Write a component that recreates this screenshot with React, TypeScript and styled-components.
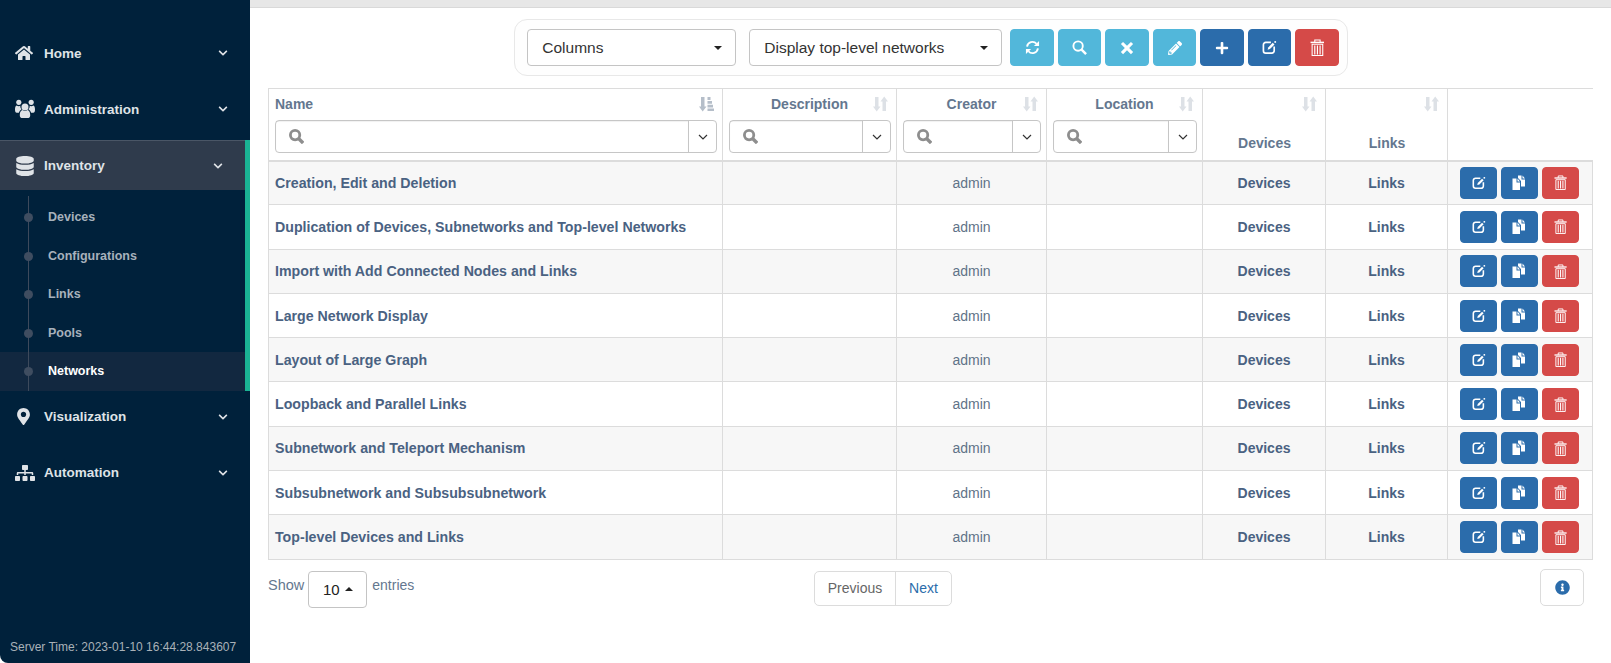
import { ReactNode } from "react";
import styled, { createGlobalStyle } from "styled-components";
import {
  FaChevronDown,
  FaDatabase,
  FaHome,
  FaInfoCircle,
  FaMapMarkerAlt,
  FaPencilAlt,
  FaPlus,
  FaSitemap,
} from "react-icons/fa";

const GlobalStyle = createGlobalStyle`
  html, body {
    margin: 0;
    padding: 0;
    height: 663px;
    overflow: hidden;
    background: #fff;
    font-family: "Liberation Sans", Arial, sans-serif;
  }
  * { box-sizing: border-box; }
`;

const rows = [
  "Creation, Edit and Deletion",
  "Duplication of Devices, Subnetworks and Top-level Networks",
  "Import with Add Connected Nodes and Links",
  "Large Network Display",
  "Layout of Large Graph",
  "Loopback and Parallel Links",
  "Subnetwork and Teleport Mechanism",
  "Subsubnetwork and Subsubsubnetwork",
  "Top-level Devices and Links",
];

const subItems = ["Devices", "Configurations", "Links", "Pools", "Networks"];

const SortIcon = () => (
  <svg width="15" height="16" viewBox="0 0 15 16" fill="currentColor">
    <path d="M2 1h3.500v9.500H7.500L3.700 15.500 0 10.500h2z" />
    <path d="M9.500 5.500H7.500L11.200.5 15 5.500h-2V15H9.500z" />
  </svg>
);

const SortActiveIcon = () => (
  <svg width="15" height="16" viewBox="0 0 15 16" fill="currentColor">
    <path d="M2 1h3.500v9.500H7.500L3.700 15.500 0 10.500h2z" />
    <path d="M8.500 1h3v3h-3zM8.500 5h4.500v2.700H8.500zM8.500 8.700H14v2.700H8.500zM8.500 12.400H15V15H8.500z" />
  </svg>
);

const DuplicateIcon = () => (
  <svg width="15" height="16" viewBox="0 0 15 16" fill="currentColor">
    <path d="M.5 3.500h4V7.500H8V15H.5z" />
    <path d="M5.500 3.500 8 6.500H5.500z" />
    <path d="M6 .5h3.500V4.500H13V11.500H9V6L6 3z" />
    <path d="M10.500.5 13 3.500h-2.500z" />
  </svg>
);

const RefreshIcon = () => (
  <svg width="15" height="15" viewBox="0 0 16 16" fill="none" stroke="currentColor" strokeWidth="2">
    <path d="M2.200 7A5.800 5.800 0 0 1 12.300 4" />
    <path d="M13.800 9A5.800 5.800 0 0 1 3.700 12" />
    <path d="M15 1v5.500H9.500zM1 15V9.500h5.500z" fill="currentColor" stroke="none" />
  </svg>
);

const SearchIcon = ({ size = 15, stroke = 2 }: { size?: number; stroke?: number }) => (
  <svg width={size} height={size} viewBox="0 0 16 16" fill="none" stroke="currentColor" strokeWidth={stroke}>
    <circle cx="6.500" cy="6.500" r="5" />
    <path d="M10.200 10.200 15 15" strokeWidth={stroke + 0.6} />
  </svg>
);

const RemoveIcon = () => (
  <svg width="14" height="14" viewBox="0 0 16 16" fill="currentColor">
    <path d="M3.500 1 8 5.500 12.500 1 15 3.500 10.500 8 15 12.500 12.500 15 8 10.500 3.500 15 1 12.500 5.500 8 1 3.500z" />
  </svg>
);

const EditIcon = ({ size = 15 }: { size?: number }) => (
  <svg width={size} height={size} viewBox="0 0 16 16" fill="none" stroke="currentColor" strokeWidth="1.800">
    <path d="M9.500 2.500H4A2.500 2.500 0 0 0 1.500 5v6.500A2.500 2.500 0 0 0 4 14h6.500a2.500 2.500 0 0 0 2.500-2.500V7" />
    <path d="M6 10.300l.6-2.400L11.500 3l1.800 1.800-4.900 4.900z" fill="currentColor" stroke="none" />
    <path d="M13.200 1.200h1.800V3h-1.800z" fill="currentColor" stroke="none" />
  </svg>
);

const TrashIcon = ({ height = 17 }: { height?: number }) => (
  <svg width={(height * 14) / 16} height={height} viewBox="1 0 14 16" fill="none" stroke="currentColor" strokeWidth="1">
    <path d="M1.500 3.200h13" strokeWidth="1.400" />
    <path d="M5.500 3V1h5v2" />
    <path d="M3 5h10v10.500H3z" />
    <path d="M5.500 6v8.500M8 6v8.500M10.500 6v8.500" strokeWidth="1.100" />
  </svg>
);

const UsersIcon = () => (
  <svg width="21" height="20" viewBox="0 0 21 20" fill="currentColor">
    <circle cx="10.500" cy="8" r="3.700" />
    <circle cx="4" cy="3" r="2.700" />
    <circle cx="17" cy="3" r="2.700" />
    <path d="M5 16.500c0-3.500 1.300-5 3-5.400.7.700 1.500 1 2.500 1s1.800-.3 2.500-1c1.700.4 3 1.900 3 5.400 0 2-1.300 3-2.800 3H7.800C6.300 19.500 5 18.500 5 16.500z" />
    <path d="M0 10.500c0-2.500.6-4 1.700-4.300.6.500 1.400.8 2.300.8.600 0 1.100-.1 1.600-.4-.2 1.300.3 2.800 1.300 3.600C5.500 11 4.500 12.200 4.100 14H1.800C.7 14 0 12.800 0 10.500z" />
    <path d="M21 10.500c0-2.500-.6-4-1.700-4.300-.6.500-1.400.8-2.300.8-.6 0-1.100-.1-1.600-.4.2 1.300-.3 2.800-1.300 3.600 1.400.8 2.400 2 2.800 3.800h2.300c1.100 0 1.800-1.200 1.800-3.500z" />
  </svg>
);

const NavItem = ({ icon, label, open }: { icon: ReactNode; label: string; open?: boolean }) => (
  <NavRow $open={open}>
    <NavIcon>{icon}</NavIcon>
    <NavLabel>{label}</NavLabel>
    <FaChevronDown size={10} />
  </NavRow>
);

const FilterBox = () => (
  <Filter>
    <FilterInput>
      <SearchIcon size={15} stroke={3} />
    </FilterInput>
    <FilterCaret>
      <svg width="10" height="6" viewBox="0 0 10 6" fill="none" stroke="#333" strokeWidth="1.200">
        <path d="M1 1l4 4 4-4" />
      </svg>
    </FilterCaret>
  </Filter>
);

const App = () => (
  <Page>
    <GlobalStyle />
    <Sidebar>
      <NavItem icon={<FaHome size={18} />} label="Home" />
      <NavItem icon={<UsersIcon />} label="Administration" />
      <InventoryGroup>
        <NavItem icon={<FaDatabase size={20} />} label="Inventory" open />
        <SubMenu>
          {subItems.map((item) => (
            <SubItem key={item} $active={item === "Networks"}>
              {item}
            </SubItem>
          ))}
        </SubMenu>
      </InventoryGroup>
      <NavItem icon={<FaMapMarkerAlt size={17} />} label="Visualization" />
      <NavItem icon={<FaSitemap size={20} />} label="Automation" />
      <ServerTime>Server Time: 2023-01-10 16:44:28.843607</ServerTime>
    </Sidebar>

    <Main>
      <TopStrip />
      <ToolbarRow>
        <Toolbar>
          <SelectBox $width={209}>
            Columns
            <Caret />
          </SelectBox>
          <SelectBox $width={253}>
            Display top-level networks
            <Caret />
          </SelectBox>
          <ToolButtons>
            <ToolButton $color="#52b7da"><RefreshIcon /></ToolButton>
            <ToolButton $color="#52b7da"><SearchIcon /></ToolButton>
            <ToolButton $color="#52b7da"><RemoveIcon /></ToolButton>
            <ToolButton $color="#52b7da"><FaPencilAlt size={14} /></ToolButton>
            <ToolButton $color="#2b6cab"><FaPlus size={14} /></ToolButton>
            <ToolButton $color="#2b6cab"><EditIcon /></ToolButton>
            <ToolButton $color="#d54a48"><TrashIcon /></ToolButton>
          </ToolButtons>
        </Toolbar>
      </ToolbarRow>

      <Grid>
        <colgroup>
          <col style={{ width: 454 }} />
          <col style={{ width: 174 }} />
          <col style={{ width: 150 }} />
          <col style={{ width: 156 }} />
          <col style={{ width: 123 }} />
          <col style={{ width: 122 }} />
          <col style={{ width: 145 }} />
        </colgroup>
        <thead>
          <tr>
            <HeadCell>
              <HeadTitle $left>
                <span>Name</span>
                <SortSlot $active><SortActiveIcon /></SortSlot>
              </HeadTitle>
              <FilterBox />
            </HeadCell>
            {["Description", "Creator", "Location"].map((title) => (
              <HeadCell key={title}>
                <HeadTitle>
                  <span>{title}</span>
                  <SortSlot><SortIcon /></SortSlot>
                </HeadTitle>
                <FilterBox />
              </HeadCell>
            ))}
            {["Devices", "Links"].map((title) => (
              <HeadCell key={title}>
                <HeadTitle>
                  <span />
                  <SortSlot><SortIcon /></SortSlot>
                </HeadTitle>
                <HeadPlain>{title}</HeadPlain>
              </HeadCell>
            ))}
            <HeadCell $noRight />
          </tr>
        </thead>
        <tbody>
          {rows.map((name) => (
            <Row key={name}>
              <NameCell>{name}</NameCell>
              <Cell />
              <Cell $center>admin</Cell>
              <Cell />
              <LinkCell>Devices</LinkCell>
              <LinkCell>Links</LinkCell>
              <Cell>
                <RowButtons>
                  <RowButton $color="#2b6cab"><EditIcon size={14} /></RowButton>
                  <RowButton $color="#2b6cab"><DuplicateIcon /></RowButton>
                  <RowButton $color="#d54a48"><TrashIcon height={15} /></RowButton>
                </RowButtons>
              </Cell>
            </Row>
          ))}
        </tbody>
      </Grid>

      <Footer>
        <LengthBox>
          <ShowText>Show</ShowText>
          <LengthSelect>
            10
            <UpCaret />
          </LengthSelect>
          <FooterText>entries</FooterText>
        </LengthBox>
        <Pager>
          <PagerButton>Previous</PagerButton>
          <PagerButton $active>Next</PagerButton>
        </Pager>
        <InfoButton>
          <FaInfoCircle size={15} />
        </InfoButton>
      </Footer>
    </Main>
  </Page>
);

export default App;

const Page = styled.div`
  display: flex;
  width: 1611px;
  height: 663px;
`;

const Sidebar = styled.nav`
  position: relative;
  flex: 0 0 250px;
  height: 663px;
  padding-top: 26px;
  display: flex;
  flex-direction: column;
  background: #00213b;
  border-bottom-left-radius: 8px;
`;

const NavRow = styled.div<{ $open?: boolean }>`
  display: flex;
  align-items: center;
  flex: 0 0 auto;
  height: ${(p) => (p.$open ? "50px" : "56px")};
  padding: 0 22px ${(p) => (p.$open ? "0" : "2px")} 15px;
  color: #dfe3e7;
  background: ${(p) => (p.$open ? "#2f3b4c" : "transparent")};
  border-top: ${(p) => (p.$open ? "1px solid #4a5666" : "none")};
`;

const NavIcon = styled.span`
  display: flex;
  align-items: center;
  justify-content: flex-start;
  width: 20px;
  margin-right: 9px;
`;

const NavLabel = styled.span`
  flex: 1;
  font-size: 13.500px;
  font-weight: 700;
`;

const InventoryGroup = styled.div`
  margin: 2px 0 -1px;
  border-right: 5px solid #1ab394;
`;

const SubMenu = styled.div`
  position: relative;
  padding-top: 8px;

  &::before {
    content: "";
    position: absolute;
    z-index: 1;
    left: 28px;
    top: 6px;
    bottom: 0;
    width: 1px;
    background: #3d4a5c;
  }
`;

const SubItem = styled.div<{ $active?: boolean }>`
  position: relative;
  height: 38.600px;
  line-height: 38.600px;
  padding-left: 48px;
  font-size: 12.500px;
  font-weight: 700;
  color: ${(p) => (p.$active ? "#ffffff" : "#a7b1bc")};
  background: ${(p) => (p.$active ? "#122840" : "transparent")};

  &::after {
    content: "";
    position: absolute;
    z-index: 2;
    left: 24px;
    top: 15px;
    width: 9px;
    height: 9px;
    border-radius: 50%;
    background: #3f4d60;
  }
`;

const ServerTime = styled.div`
  position: absolute;
  left: 10px;
  bottom: 9px;
  font-size: 12px;
  color: #a9b1b8;
  white-space: nowrap;
`;

const Main = styled.main`
  flex: 1;
  min-width: 0;
  padding: 0 19px 0 18px;
`;

const TopStrip = styled.div`
  height: 8px;
  margin: 0 -19px 0 -18px;
  background: #e7e7e7;
  border-bottom: 1px solid #d9d9d9;
`;

const ToolbarRow = styled.div`
  display: flex;
  justify-content: center;
  margin-top: 11px;
  padding-left: 2px;
`;

const Toolbar = styled.div`
  display: flex;
  align-items: center;
  gap: 13px;
  height: 57px;
  padding: 0 8px 0 12px;
  border: 1px solid #e8e8e8;
  border-radius: 13px;
  background: #fefefe;
`;

const SelectBox = styled.div<{ $width: number }>`
  display: flex;
  align-items: center;
  justify-content: space-between;
  width: ${(p) => p.$width}px;
  height: 37px;
  padding: 0 13px 0 14px;
  border: 1px solid #c4c4c4;
  border-radius: 4px;
  background: #fff;
  color: #333;
  font-size: 15.500px;
`;

const Caret = styled.span`
  width: 0;
  height: 0;
  border-left: 4px solid transparent;
  border-right: 4px solid transparent;
  border-top: 4px solid #222;
`;

const UpCaret = styled.span`
  display: inline-block;
  margin-left: 5px;
  width: 0;
  height: 0;
  border-left: 4px solid transparent;
  border-right: 4px solid transparent;
  border-bottom: 4px solid #222;
`;

const ToolButtons = styled.div`
  display: flex;
  gap: 4px;
  margin-left: -5px;
`;

const ToolButton = styled.button<{ $color: string }>`
  display: flex;
  align-items: center;
  justify-content: center;
  width: 43.500px;
  height: 37px;
  padding: 0;
  border: 1px solid ${(p) => p.$color};
  border-radius: 4px;
  background: ${(p) => p.$color};
  color: #fff;
`;

const Grid = styled.table`
  width: 1324px;
  margin-top: 12px;
  border-collapse: collapse;
  table-layout: fixed;
`;

const HeadCell = styled.th<{ $noRight?: boolean }>`
  height: 72px;
  padding: 0 5px 0 6px;
  vertical-align: top;
  border-top: 1px solid #dcdcdc;
  border-left: 1px solid #dcdcdc;
  border-right: ${(p) => (p.$noRight ? "none" : "1px solid #dcdcdc")};
  border-bottom: 2px solid #dcdcdc;
  background: #fff;
`;

const HeadTitle = styled.div<{ $left?: boolean }>`
  display: grid;
  grid-template-columns: 1fr auto;
  align-items: center;
  height: 31px;
  padding: ${(p) => (p.$left ? "0 3px 2px 0" : "0 3px 2px 17px")};
  font-size: 14px;
  font-weight: 700;
  color: #64778f;
  text-align: ${(p) => (p.$left ? "left" : "center")};
`;

const SortSlot = styled.span<{ $active?: boolean }>`
  display: flex;
  color: ${(p) => (p.$active ? "#b5bec9" : "#dde1e6")};
`;

const HeadPlain = styled.div`
  margin-top: 15px;
  text-align: center;
  font-size: 14px;
  font-weight: 700;
  color: #64778f;
`;

const Filter = styled.div`
  display: flex;
  height: 33px;
  border: 1px solid #c6c6c6;
  border-radius: 4px;
  background: #fff;
`;

const FilterInput = styled.div`
  flex: 1;
  display: flex;
  align-items: center;
  padding-left: 13px;
  color: #8e8e8e;
  box-shadow: inset 0 1px 1px rgba(0, 0, 0, 0.06);
`;

const FilterCaret = styled.div`
  flex: 0 0 28px;
  display: flex;
  align-items: center;
  justify-content: center;
  border-left: 1px solid #c6c6c6;
`;

const Row = styled.tr`
  height: 44.300px;

  &:nth-child(odd) {
    background: #f7f7f7;
  }
`;

const Cell = styled.td<{ $center?: boolean }>`
  padding: 0 6px;
  border: 1px solid #dcdcdc;
  font-size: 14px;
  color: #5f7388;
  text-align: ${(p) => (p.$center ? "center" : "left")};
`;

const NameCell = styled(Cell)`
  font-size: 14.200px;
  font-weight: 700;
  color: #4a6282;
  white-space: nowrap;
`;

const LinkCell = styled(Cell)`
  font-weight: 700;
  color: #4a6282;
  text-align: center;
`;

const RowButtons = styled.div`
  display: flex;
  justify-content: flex-end;
  gap: 4px;
  padding-right: 7px;
`;

const RowButton = styled.button<{ $color: string }>`
  display: flex;
  align-items: center;
  justify-content: center;
  width: 37px;
  height: 32px;
  padding: 0;
  border: 1px solid ${(p) => p.$color};
  border-radius: 4px;
  background: ${(p) => p.$color};
  color: #fff;
`;

const Footer = styled.div`
  display: grid;
  grid-template-columns: 546px 138px 1fr;
  align-items: start;
  width: 1324px;
  margin-top: 11px;
`;

const LengthBox = styled.div`
  display: flex;
  align-items: flex-start;
  gap: 4px;
`;

const FooterText = styled.span`
  margin: 6px 0 0 1px;
  font-size: 14px;
  color: #64778f;
`;

const ShowText = styled(FooterText)`
  margin-left: 0;
  font-size: 14.500px;
`;

const LengthSelect = styled.div`
  display: flex;
  align-items: center;
  justify-content: center;
  width: 59px;
  height: 37px;
  border: 1px solid #c4c4c4;
  border-radius: 4px;
  font-size: 15px;
  color: #222;
`;

const Pager = styled.div`
  display: flex;
  height: 35px;
  border: 1px solid #dcdcdc;
  border-radius: 5px;
  overflow: hidden;
`;

const PagerButton = styled.div<{ $active?: boolean }>`
  display: flex;
  align-items: center;
  justify-content: center;
  flex: ${(p) => (p.$active ? "0 0 56px" : "1")};
  font-size: 14px;
  color: ${(p) => (p.$active ? "#2b6cab" : "#666")};
  border-left: ${(p) => (p.$active ? "1px solid #dcdcdc" : "none")};
`;

const InfoButton = styled.div`
  justify-self: end;
  display: flex;
  align-items: center;
  justify-content: center;
  width: 44px;
  height: 37px;
  margin: -2px 8px 0 0;
  border: 1px solid #dcdcdc;
  border-radius: 5px;
  color: #2b6cab;
`;
